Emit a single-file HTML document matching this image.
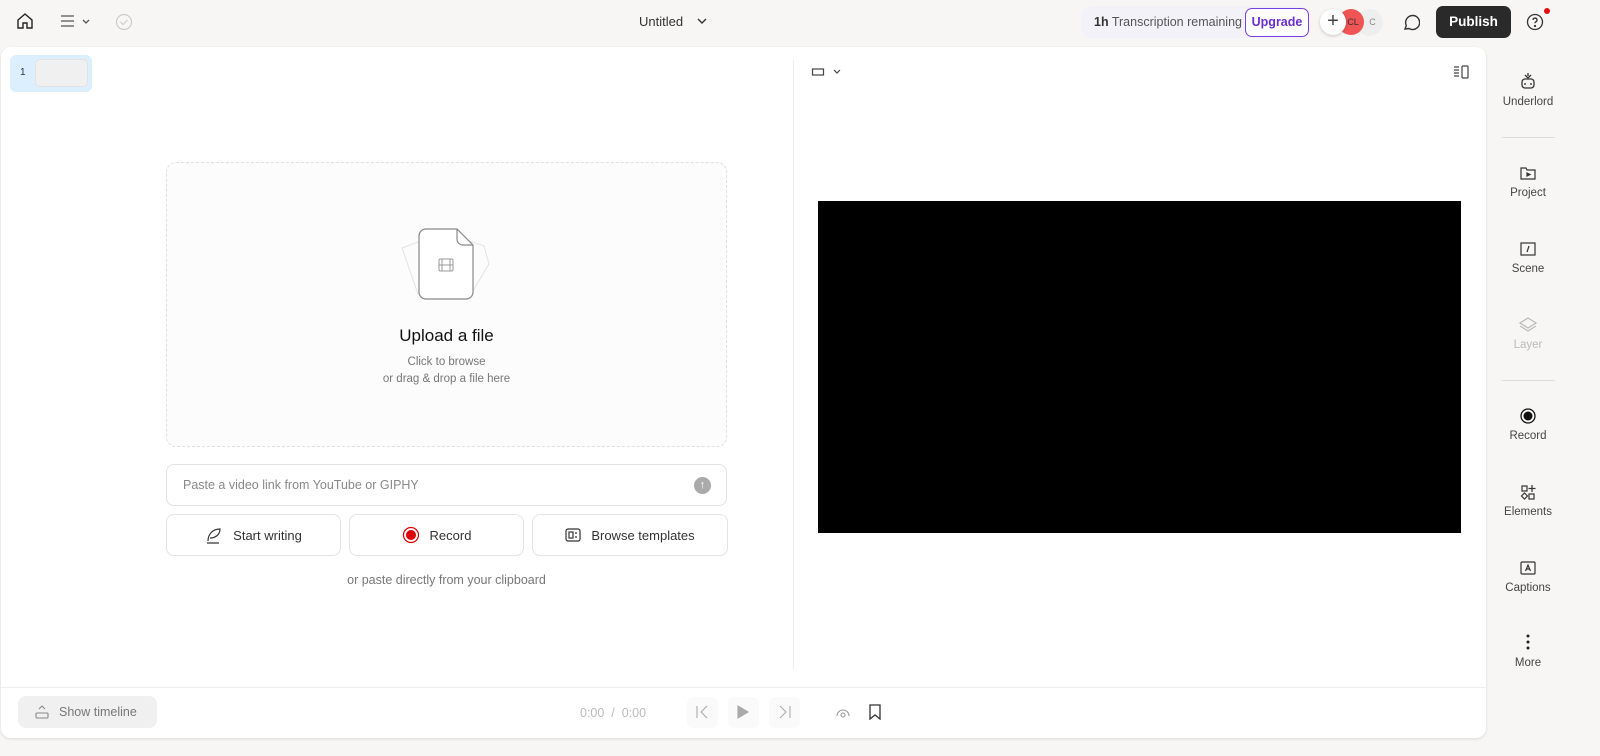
<!DOCTYPE html>
<html><head><meta charset="utf-8"><style>
*{box-sizing:border-box;margin:0;padding:0}
body{width:1600px;height:756px;background:#f7f6f5;font-family:"Liberation Sans",sans-serif;position:relative;overflow:hidden;color:#222}
.a{position:absolute}
.panel{left:1px;top:47px;width:1485px;height:691px;background:#fff;border-radius:10px;box-shadow:0 1px 3px rgba(0,0,0,.12)}
.btn{position:absolute;top:514px;height:42px;border:1px solid #e3e3e3;border-radius:8px;display:flex;align-items:center;justify-content:center;font-size:13px;color:#333;gap:10px;background:#fff}
.side{left:1488px;width:80px;text-align:center;font-size:11.5px;color:#444}
.side svg{display:block;margin:0 auto 6px}
</style></head><body>
<!-- top bar -->
<svg class="a" style="left:16px;top:12px" width="18" height="18" viewBox="0 0 18 18" fill="none" stroke="#222" stroke-width="1.4"><path d="M2 8L9 2l7 6v8h-5v-5H7v5H2z"/></svg>
<svg class="a" style="left:60px;top:14px" width="34" height="14" viewBox="0 0 34 14" fill="none" stroke="#555" stroke-width="1.3"><path d="M1 2h13M1 7h13M1 12h13M23 6l3 3 3-3"/></svg>
<svg class="a" style="left:115px;top:13px" width="18" height="18" viewBox="0 0 18 18" fill="none" stroke="#ccc" stroke-width="1.2"><circle cx="9" cy="9" r="7.5"/><path d="M5.5 9l2.5 2.5 4.5-4.5"/></svg>
<div class="a" style="left:639px;top:14px;font-size:13px;color:#333">Untitled</div>
<svg class="a" style="left:697px;top:18px" width="10" height="7" viewBox="0 0 10 7" fill="none" stroke="#333" stroke-width="1.4"><path d="M1 1l4 4 4-4"/></svg>
<div class="a" style="left:1081px;top:6px;width:230px;height:32px;background:#f4f2f9;border-radius:10px"></div>
<div class="a" style="left:1094px;top:15px;font-size:12.5px;color:#555"><b style="color:#333">1h</b> Transcription remaining</div>
<div class="a" style="left:1245px;top:8px;width:64px;height:29px;border:1.5px solid #7b3fe4;border-radius:7px;background:#fff;color:#6a2ed0;font-size:12.5px;font-weight:bold;text-align:center;line-height:26px">Upgrade</div>
<div class="a" style="left:1356px;top:9px;width:27px;height:27px;border-radius:50%;background:#eee;font-size:9px;color:#888;text-align:center;line-height:27px;padding-left:6px">C</div>
<div class="a" style="left:1338px;top:9px;width:26px;height:26px;border-radius:50%;background:#f05454;font-size:9px;color:#333;text-align:center;line-height:26px;padding-left:4px">CL</div>
<div class="a" style="left:1320px;top:9px;width:26px;height:26px;border-radius:50%;background:#fff;box-shadow:0 1px 3px rgba(0,0,0,.2);font-size:20px;color:#444;text-align:center;line-height:25px">+</div>
<svg class="a" style="left:1402px;top:13px" width="18" height="18" viewBox="0 0 18 18" fill="none" stroke="#333" stroke-width="1.4"><path d="M3 16l1.3-3.5A7 7 0 1 1 7 15.5z"/></svg>
<div class="a" style="left:1436px;top:6px;width:75px;height:32px;background:#2a2a2a;border-radius:7px;color:#fff;font-weight:bold;font-size:13.5px;text-align:center;line-height:32px">Publish</div>
<svg class="a" style="left:1526px;top:13px" width="18" height="18" viewBox="0 0 18 18" fill="none" stroke="#333" stroke-width="1.3"><circle cx="9" cy="9" r="7.5"/><path d="M7 7a2 2 0 1 1 2.5 2c-.5.2-.5.6-.5 1.3"/><circle cx="9" cy="13" r=".5" fill="#333"/></svg>
<div class="a" style="left:1544px;top:8px;width:6px;height:6px;border-radius:50%;background:#e01010"></div>

<div class="a panel"></div>
<!-- scene thumb -->
<div class="a" style="left:10px;top:55px;width:82px;height:37px;background:#dcefff;border-radius:6px"></div>
<div class="a" style="left:20px;top:67px;font-size:10px;color:#333">1</div>
<div class="a" style="left:35px;top:59px;width:53px;height:28px;background:#f0f0f0;border:1px solid #e2e2e2;border-radius:5px"></div>
<!-- upload area -->
<div class="a" style="left:166px;top:162px;width:561px;height:285px;border:1px dashed #e0e0e0;border-radius:10px;background:#fcfcfc"></div>
<svg class="a" style="left:398px;top:226px" width="94" height="76" viewBox="0 0 94 76" fill="none">
<path d="M4 22l42-16 40 14 5 18-18 30H20z" stroke="#e3e3e3" stroke-width="1"/>
<path d="M28 3h31l16 16v47a7 7 0 0 1-7 7H28a7 7 0 0 1-7-7V10a7 7 0 0 1 7-7z" fill="#fff" stroke="#888" stroke-width="1.2"/>
<path d="M59 3v10a6 6 0 0 0 6 6h10" stroke="#888" stroke-width="1.2"/>
<rect x="41" y="33" width="14" height="12" rx="1.5" stroke="#999"/><path d="M44 33v12M52 33v12M41 39h14" stroke="#999"/>
</svg>
<div class="a" style="left:166px;top:326px;width:561px;text-align:center;font-size:17px;color:#111">Upload a file</div>
<div class="a" style="left:166px;top:354px;width:561px;text-align:center;font-size:11.5px;color:#777;line-height:17px">Click to browse<br>or drag &amp; drop a file here</div>
<div class="a" style="left:166px;top:464px;width:561px;height:42px;border:1px solid #e3e3e3;border-radius:8px"></div>
<div class="a" style="left:183px;top:478px;font-size:12.5px;color:#888">Paste a video link from YouTube or GIPHY</div>
<div class="a" style="left:694px;top:477px;width:17px;height:17px;border-radius:50%;background:#aaa;color:#fff;font-size:11px;text-align:center;line-height:17px">↑</div>
<div class="btn" style="left:166px;width:175px"><svg width="18" height="18" viewBox="0 0 18 18" fill="none" stroke="#333" stroke-width="1.2"><path d="M3 15C3 8 8 3 15 3c0 6-5 9-10 9M2 17h12"/></svg>Start writing</div>
<div class="btn" style="left:349px;width:175px"><svg width="18" height="18" viewBox="0 0 18 18"><circle cx="9" cy="9" r="7.5" fill="none" stroke="#d00" stroke-width="1.2"/><circle cx="9" cy="9" r="5" fill="#d00"/></svg>Record</div>
<div class="btn" style="left:532px;width:196px"><svg width="16" height="14" viewBox="0 0 16 14" fill="none" stroke="#333" stroke-width="1.2"><rect x="1" y="1" width="14" height="12" rx="2"/><rect x="4" y="4" width="4" height="6"/><path d="M10 5h2M10 9h2"/></svg>Browse templates</div>
<div class="a" style="left:166px;top:573px;width:561px;text-align:center;font-size:12.5px;color:#777">or paste directly from your clipboard</div>
<!-- divider -->
<div class="a" style="left:793px;top:60px;width:1px;height:610px;background:#eee"></div>
<svg class="a" style="left:811px;top:67px" width="34" height="10" viewBox="0 0 34 10" fill="none" stroke="#444" stroke-width="1.2"><rect x="1.5" y="2" width="11" height="6"/><path d="M23 3l3 3 3-3"/></svg>
<svg class="a" style="left:1453px;top:65px" width="16" height="14" viewBox="0 0 16 14" fill="none" stroke="#444" stroke-width="1.2"><path d="M1 2h5M1 5h5M1 8h5M1 11h5"/><rect x="9" y="1" width="6" height="12" rx="1"/></svg>
<div class="a" style="left:818px;top:201px;width:643px;height:332px;background:#000"></div>
<!-- bottom bar -->
<div class="a" style="left:1px;top:687px;width:1485px;height:1px;background:#eee"></div>
<div class="a" style="left:18px;top:696px;width:139px;height:32px;background:#f0f0f0;border-radius:8px"></div>
<svg class="a" style="left:35px;top:704px" width="14" height="15" viewBox="0 0 14 15" fill="none" stroke="#888" stroke-width="1.1"><path d="M4 5l3-3 3 3"/><rect x="1" y="9" width="12" height="5" rx="1"/></svg>
<div class="a" style="left:59px;top:705px;font-size:12.5px;color:#777">Show timeline</div>
<div class="a" style="left:580px;top:706px;font-size:12.5px;color:#bbb">0:00 &nbsp;/ &nbsp;0:00</div>
<div class="a" style="left:687px;top:697px;width:31px;height:31px;background:#fafafa;border-radius:6px"></div>
<div class="a" style="left:728px;top:697px;width:31px;height:31px;background:#fafafa;border-radius:6px"></div>
<div class="a" style="left:769px;top:697px;width:31px;height:31px;background:#fafafa;border-radius:6px"></div>
<svg class="a" style="left:696px;top:705px" width="100" height="14" viewBox="0 0 100 14" fill="none" stroke="#aaa" stroke-width="1.1"><path d="M1 1v12M11 1L5 7l6 6"/><path d="M42 1l10 6-10 6z" fill="#aaa"/><path d="M84 1l6 6-6 6M94 1v12"/></svg>
<svg class="a" style="left:835px;top:704px" width="16" height="16" viewBox="0 0 16 16" fill="none" stroke="#999" stroke-width="1.1"><path d="M2 12a6 6 0 1 1 12 0"/><circle cx="8" cy="11" r="2"/></svg>
<svg class="a" style="left:869px;top:704px" width="12" height="16" viewBox="0 0 12 16" fill="none" stroke="#333" stroke-width="1.3"><path d="M1 1h10v14l-5-4-5 4z"/></svg>
<!-- sidebar -->
<div class="a side" style="top:72px"><svg width="18" height="18" viewBox="0 0 18 18" fill="none" stroke="#333" stroke-width="1.3"><rect x="3" y="7" width="12" height="9" rx="3"/><path d="M6 11v2M12 11v2M6 3l3 3 3-3M9 1v3"/></svg>Underlord</div>
<div class="a" style="left:1502px;top:137px;width:53px;height:1px;background:#ddd"></div>
<div class="a side" style="top:165px"><svg width="16" height="16" viewBox="0 0 16 16" fill="none" stroke="#333" stroke-width="1.2"><path d="M1 3h5l1 2h8v9H1z"/><path d="M7 8l3 1.5-3 1.5z" fill="#333"/></svg>Project</div>
<div class="a side" style="top:241px"><svg width="16" height="16" viewBox="0 0 16 16" fill="none" stroke="#333" stroke-width="1.2"><rect x="1" y="2" width="14" height="12"/><path d="M9 5l-2 6"/></svg>Scene</div>
<div class="a side" style="top:317px;color:#bbb"><svg width="18" height="16" viewBox="0 0 18 16" fill="none" stroke="#bbb" stroke-width="1.2"><path d="M9 1l8 5-8 5-8-5z M1 9l8 5 8-5"/></svg>Layer</div>
<div class="a" style="left:1502px;top:380px;width:53px;height:1px;background:#ddd"></div>
<div class="a side" style="top:408px"><svg width="16" height="16" viewBox="0 0 16 16"><circle cx="8" cy="8" r="7" fill="none" stroke="#111" stroke-width="1.3"/><circle cx="8" cy="8" r="4.5" fill="#111"/></svg>Record</div>
<div class="a side" style="top:484px"><svg width="16" height="16" viewBox="0 0 16 16" fill="none" stroke="#333" stroke-width="1.2"><rect x="2" y="2" width="5" height="5"/><path d="M12 1v7M8.5 4.5h7"/><path d="M4.5 9l3 3-3 3-3-3z"/><rect x="9" y="10" width="5" height="5"/></svg>Elements</div>
<div class="a side" style="top:560px"><svg width="16" height="16" viewBox="0 0 16 16" fill="none" stroke="#333" stroke-width="1.2"><rect x="1" y="2" width="14" height="12" rx="1"/><path d="M5.5 11L8 5l2.5 6M6.5 9h3"/></svg>Captions</div>
<div class="a side" style="top:633px"><svg width="16" height="18" viewBox="0 0 16 18" fill="#222"><circle cx="8" cy="3" r="1.5"/><circle cx="8" cy="9" r="1.5"/><circle cx="8" cy="15" r="1.5"/></svg>More</div>
</body></html>
